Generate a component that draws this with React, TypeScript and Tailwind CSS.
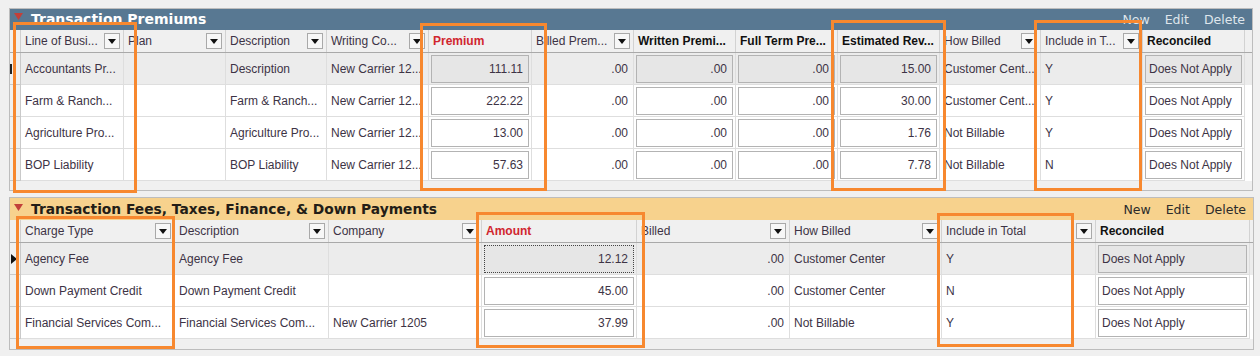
import React from 'react'

type Col = { label: string; w: string; kind: 'text' | 'num' | 'box' | 'pick'; filter?: boolean; head?: 'red' | 'bold' }

const topCols: Col[] = [
  { label: 'Line of Busi...', w: 'w-[103px]', kind: 'text', filter: true },
  { label: 'Plan', w: 'w-[102px]', kind: 'text', filter: true },
  { label: 'Description', w: 'w-[101px]', kind: 'text', filter: true },
  { label: 'Writing Co...', w: 'w-[102px]', kind: 'text', filter: true },
  { label: 'Premium', w: 'w-[103px]', kind: 'box', head: 'red' },
  { label: 'Billed Prem...', w: 'w-[102px]', kind: 'num', filter: true },
  { label: 'Written Premi...', w: 'w-[102px]', kind: 'box', head: 'bold' },
  { label: 'Full Term Pre...', w: 'w-[102px]', kind: 'box', head: 'bold' },
  { label: 'Estimated Rev...', w: 'w-[102px]', kind: 'box', head: 'bold' },
  { label: 'How Billed', w: 'w-[101px]', kind: 'text', filter: true },
  { label: 'Include in T...', w: 'w-[102px]', kind: 'text', filter: true },
  { label: 'Reconciled', w: 'w-[102px]', kind: 'pick', head: 'bold' },
]

const topRows = [
  ['Accountants Pr...', '', 'Description', 'New Carrier 12...', '111.11', '.00', '.00', '.00', '15.00', 'Customer Cent...', 'Y', 'Does Not Apply'],
  ['Farm & Ranch...', '', 'Farm & Ranch...', 'New Carrier 12...', '222.22', '.00', '.00', '.00', '30.00', 'Customer Cent...', 'Y', 'Does Not Apply'],
  ['Agriculture Pro...', '', 'Agriculture Pro...', 'New Carrier 12...', '13.00', '.00', '.00', '.00', '1.76', 'Not Billable', 'Y', 'Does Not Apply'],
  ['BOP Liability', '', 'BOP Liability', 'New Carrier 12...', '57.63', '.00', '.00', '.00', '7.78', 'Not Billable', 'N', 'Does Not Apply'],
]

const feeCols: Col[] = [
  { label: 'Charge Type', w: 'w-[154px]', kind: 'text', filter: true },
  { label: 'Description', w: 'w-[154px]', kind: 'text', filter: true },
  { label: 'Company', w: 'w-[153px]', kind: 'text', filter: true },
  { label: 'Amount', w: 'w-[155px]', kind: 'box', head: 'red' },
  { label: 'Billed', w: 'w-[153px]', kind: 'num', filter: true },
  { label: 'How Billed', w: 'w-[152px]', kind: 'text', filter: true },
  { label: 'Include in Total', w: 'w-[154px]', kind: 'text', filter: true },
  { label: 'Reconciled', w: 'w-[154px]', kind: 'pick', head: 'bold' },
]

const feeRows = [
  ['Agency Fee', 'Agency Fee', '', '12.12', '.00', 'Customer Center', 'Y', 'Does Not Apply'],
  ['Down Payment Credit', 'Down Payment Credit', '', '45.00', '.00', 'Customer Center', 'N', 'Does Not Apply'],
  ['Financial Services Com...', 'Financial Services Com...', 'New Carrier 1205', '37.99', '.00', 'Not Billable', 'Y', 'Does Not Apply'],
]

function FilterButton() {
  return (
    <span className="ml-auto mr-[3px] flex h-[16px] w-[16px] shrink-0 items-center justify-center border border-[#a9a9a9] bg-[#f7f7f7]">
      <svg width="8" height="5" viewBox="0 0 8 5">
        <path d="M0 0h8L4 5z" fill="#111" />
      </svg>
    </span>
  )
}

function Collapse({ cls }: { cls: string }) {
  return (
    <svg width="9" height="7" viewBox="0 0 9 7" className={`ml-[4px] mr-[8px] shrink-0 self-start ${cls}`}>
      <path d="M0 0h9L4.5 7z" fill="#c2403a" />
    </svg>
  )
}

function HeaderRow({ cols }: { cols: Col[] }) {
  return (
    <div className="flex h-[23px] border-b border-[#a9a9a9] bg-[#f0f0f0]">
      <div className="w-[11px] shrink-0 border-r border-[#cfcfcf]" />
      {cols.map((c) => (
        <div key={c.label} className={`${c.w} flex shrink-0 items-center border-r border-[#d2d2d2] pl-[4px]`}>
          <span
            className={
              c.head === 'red'
                ? 'font-bold text-[#d0262f]'
                : c.head === 'bold'
                  ? 'font-bold text-[#111]'
                  : 'text-[#3d3345]'
            }
          >
            {c.label}
          </span>
          {c.filter && <FilterButton />}
        </div>
      ))}
    </div>
  )
}

function Cell({ col, value, selected, focused }: { col: Col; value: string; selected: boolean; focused?: boolean }) {
  const base = `${col.w} shrink-0 flex items-center border-r border-b border-[#dedede]`
  if (col.kind === 'box' || col.kind === 'pick') {
    return (
      <div className={`${base} px-[2px]`}>
        <div
          className={`flex h-[28px] w-full items-center ${col.kind === 'box' ? 'justify-end pr-[5px]' : 'pl-[3px]'} ${
            focused ? 'border border-dotted border-[#444]' : 'border border-[#b3b3b3]'
          } ${selected ? 'bg-[#e6e6e6]' : 'bg-white'}`}
        >
          {value}
        </div>
      </div>
    )
  }
  return (
    <div className={`${base} overflow-hidden whitespace-nowrap ${col.kind === 'num' ? 'justify-end pr-[5px]' : 'pl-[4px]'}`}>
      {value}
    </div>
  )
}

function Grid({ cols, rows, marker }: { cols: Col[]; rows: string[][]; marker: 'bar' | 'arrow' }) {
  return (
    <div>
      <HeaderRow cols={cols} />
      {rows.map((r, i) => (
        <div key={i} className={`flex h-[32px] ${i === 0 ? 'bg-[#ececec]' : 'bg-white'}`}>
          <div className="flex w-[11px] shrink-0 items-center border-r border-b border-[#c9c9c9] bg-[#f0f0f0]">
            {i === 0 && marker === 'bar' && <span className="h-[10px] w-[2px] bg-[#222]" />}
            {i === 0 && marker === 'arrow' && (
              <svg width="6" height="10" viewBox="0 0 6 10" className="ml-[1px]">
                <path d="M0 0l6 5-6 5z" fill="#111" />
              </svg>
            )}
          </div>
          {cols.map((c, j) => (
            <Cell key={j} col={c} value={r[j]} selected={i === 0} focused={i === 0 && c.head === 'red' && marker === 'arrow'} />
          ))}
        </div>
      ))}
    </div>
  )
}

function Actions({ light }: { light?: boolean }) {
  return (
    <div className={`ml-auto mr-[7px] flex gap-[15px] self-end font-['DejaVu_Sans',sans-serif] text-[12.5px] ${light ? 'text-[#dfe6ec]' : 'text-[#2b2b2b]'}`}>
      <span>New</span>
      <span>Edit</span>
      <span>Delete</span>
    </div>
  )
}

function OrangeBox({ cls }: { cls: string }) {
  return <div className={`pointer-events-none absolute border-[3px] border-[#f7882f] ${cls}`} />
}

export default function App() {
  return (
    <div className="relative h-[356px] w-[1260px] overflow-hidden bg-[#f0f0f0] font-['Liberation_Sans',Arial,sans-serif] text-[12px] text-[#3d3345]">
      <div className="flex flex-col gap-[6px] pl-[9px] pt-[8px]">
        <section className="w-[1244px] border border-[#bdbdbd]">
          <div className="flex h-[21px] items-center bg-[#587892]">
            <Collapse cls="mt-[4px]" />
            <h2 className="font-['DejaVu_Sans',sans-serif] text-[14px] font-bold text-white">Transaction Premiums</h2>
            <Actions light />
          </div>
          <Grid cols={topCols} rows={topRows} marker="bar" />
          <div className="h-[9px]" />
        </section>

        <section className="w-[1245px] border border-[#bdbdbd]">
          <div className="flex h-[22px] items-center bg-[#f7d28d]">
            <Collapse cls="mt-[6px]" />
            <h2 className="font-['DejaVu_Sans',sans-serif] text-[13.8px] font-bold text-[#231d17]">
              Transaction Fees, Taxes, Finance, &amp; Down Payments
            </h2>
            <Actions />
          </div>
          <Grid cols={feeCols} rows={feeRows} marker="arrow" />
          <div className="h-[10px]" />
        </section>
      </div>

      <OrangeBox cls="left-[13px] top-[22px] h-[171px] w-[124px]" />
      <OrangeBox cls="left-[420px] top-[23px] h-[168px] w-[127px]" />
      <OrangeBox cls="left-[831px] top-[20px] h-[171px] w-[115px]" />
      <OrangeBox cls="left-[1034px] top-[20px] h-[171px] w-[108px]" />
      <OrangeBox cls="left-[16px] top-[216px] h-[133px] w-[159px]" />
      <OrangeBox cls="left-[476px] top-[212px] h-[136px] w-[169px]" />
      <OrangeBox cls="left-[937px] top-[213px] h-[134px] w-[137px]" />
    </div>
  )
}
